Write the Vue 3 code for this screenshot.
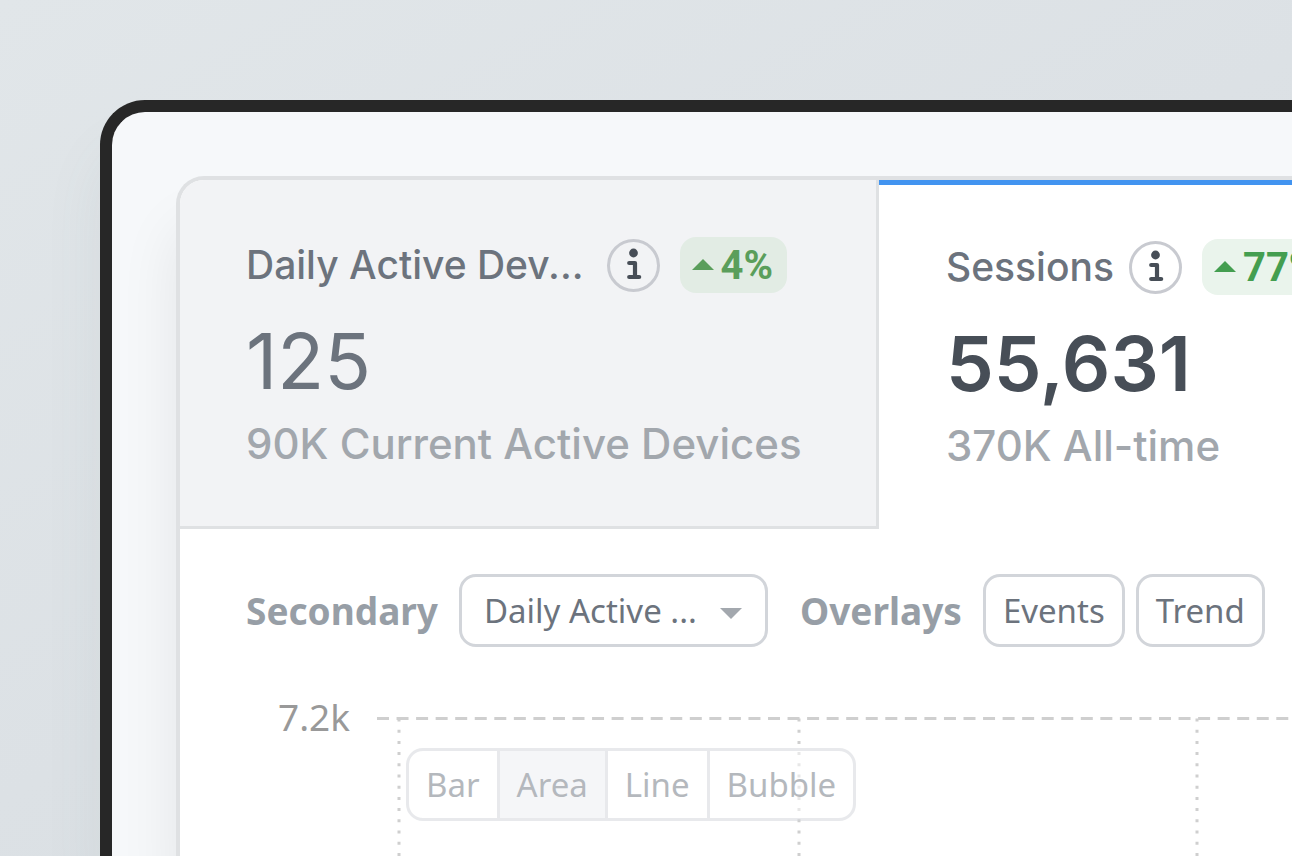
<script setup>
import { ref } from 'vue';

const stats = [
  {
    id: 'devices',
    title: 'Daily Active Dev...',
    change: '4%',
    value: '125',
    note: '90K Current Active Devices'
  },
  {
    id: 'sessions',
    title: 'Sessions',
    change: '77%',
    value: '55,631',
    note: '370K All-time'
  }
];
const activeStat = ref('sessions');

const secondary = ref('Daily Active ...');
const overlays = ['Events', 'Trend'];
const activeOverlays = ref([]);

const chartTypes = ['Bar', 'Area', 'Line', 'Bubble'];
const chartType = ref('Area');

const gridLines = [22, 422, 820, 1219];

function toggleOverlay(name) {
  const list = activeOverlays.value;
  activeOverlays.value = list.includes(name) ? list.filter(o => o !== name) : [...list, name];
}
</script>

<template>
  <div class="stage">
    <main class="device">
      <div class="card">
        <div class="stats">
          <section
            v-for="stat in stats"
            :key="stat.id"
            class="stat"
            :class="{ active: stat.id === activeStat }"
          >
            <div class="stat-head">
              <button type="button" class="stat-title" @click="activeStat = stat.id">{{ stat.title }}</button>
              <button type="button" class="info-button" :aria-label="'About ' + stat.title">
                <svg viewBox="0 0 53 53" aria-hidden="true">
                  <circle cx="26.5" cy="14" r="4.4" fill="#474e57" />
                  <path
                    d="M22.2 24H28v14M22.2 38h10"
                    fill="none"
                    stroke="#474e57"
                    stroke-width="4.2"
                    stroke-linecap="round"
                    stroke-linejoin="round"
                  />
                </svg>
              </button>
              <span class="badge">
                <svg class="badge-arrow" viewBox="0 0 22 12" aria-hidden="true">
                  <path d="M0 11L11 0l11 11z" fill="currentColor" />
                </svg>
                {{ stat.change }}
              </span>
            </div>
            <div class="stat-value">{{ stat.value }}</div>
            <div class="stat-note">{{ stat.note }}</div>
          </section>
        </div>

        <div class="filters">
          <div class="filter">
            <label for="secondary" class="filter-label">Secondary</label>
            <div class="select-wrap">
              <select id="secondary" v-model="secondary">
                <option>Daily Active ...</option>
                <option>Sessions</option>
              </select>
              <svg class="select-arrow" viewBox="0 0 22 11" aria-hidden="true">
                <path d="M0 0h22L11 11z" fill="#a3a8ae" />
              </svg>
            </div>
          </div>
          <div class="filter" role="group" aria-labelledby="overlays-label">
            <span id="overlays-label" class="filter-label">Overlays</span>
            <div class="overlay-buttons">
              <button
                v-for="name in overlays"
                :key="name"
                type="button"
                class="overlay-button"
                :aria-pressed="activeOverlays.includes(name)"
                @click="toggleOverlay(name)"
              >{{ name }}</button>
            </div>
          </div>
        </div>

        <div class="chart">
          <span class="axis-label">7.2k</span>
          <div class="plot">
            <svg class="grid-lines" aria-hidden="true">
              <line x1="0" y1="1.5" x2="100%" y2="1.5" stroke-dasharray="12 7.55" />
              <line
                v-for="x in gridLines"
                :key="x"
                :x1="x"
                y1="1.5"
                :x2="x"
                y2="100%"
                stroke-dasharray="3 8.2"
              />
            </svg>
            <div class="chart-types" role="group" aria-label="Chart type">
              <button
                v-for="type in chartTypes"
                :key="type"
                type="button"
                :class="{ selected: type === chartType }"
                :aria-pressed="type === chartType"
                @click="chartType = type"
              >{{ type }}</button>
            </div>
          </div>
        </div>
      </div>
    </main>
  </div>
</template>

<style>
body { margin: 0; }
</style>

<style scoped>
.stage {
  display: flex;
  box-sizing: border-box;
  height: 100vh;
  padding: 100px 0 0 100px;
  overflow: hidden;
  background: linear-gradient(150deg, #e1e6e9 0%, #dce1e5 50%, #d7dde1 100%);
  font-family: "Noto Sans", sans-serif;
}
button, select { font-family: inherit; margin: 0; cursor: pointer; }
.device {
  display: flex;
  flex: 1;
  min-width: 0;
  box-sizing: border-box;
  padding: 64px 0 0 64px;
  border: solid #272727;
  border-width: 12px 0 0 12px;
  border-top-left-radius: 45px;
  background: #f6f8fa;
  box-shadow: 0 50px 60px rgba(90, 110, 120, 0.08);
}
.card {
  display: flex;
  flex-direction: column;
  flex: 1;
  min-width: 0;
  border: solid #dfe1e3;
  border-width: 4px 0 0 4px;
  border-top-left-radius: 28px;
  background: #fff;
  box-shadow: 0 50px 60px rgba(0, 0, 0, 0.08);
}

/* stat tabs */
.stats { display: flex; }
.stat {
  flex: none;
  box-sizing: border-box;
  width: 699px;
  padding: 57px 64px 55px 66px;
  border: solid #dfe1e3;
  border-width: 0 3px 3px 0;
  background: #f2f3f5;
  font-family: Inter, sans-serif;
}
.stat:first-child { border-top-left-radius: 24px; }
.stat.active {
  padding-top: 54px;
  padding-left: 67px;
  border-color: #4294f0;
  border-width: 5px 0 0;
  background: #fff;
}
.stat-head { display: flex; align-items: center; height: 56px; white-space: nowrap; }
.stat-title {
  padding: 0;
  border: 0;
  background: none;
  font-size: 39px;
  font-weight: 500;
  line-height: 56px;
  color: #6c737d;
}
.info-button {
  box-sizing: border-box;
  width: 53px;
  height: 53px;
  margin-left: 23px;
  padding: 0;
  border: 3px solid #c8cad0;
  border-radius: 50%;
  background: none;
}
.active .info-button { margin-left: 15px; }
.info-button svg { display: block; width: 53px; height: 53px; margin: -3px; }
.badge {
  display: flex;
  align-items: center;
  gap: 7px;
  height: 56px;
  margin-left: 20px;
  padding: 0 14px 0 12px;
  border-radius: 16px;
  background: #e2ece4;
  font-family: Roboto, sans-serif;
  font-size: 40px;
  font-weight: 700;
  color: #5a9e5b;
}
.active .badge { background: #eaf4ec; color: #449e50; }
.badge-arrow { width: 22px; height: 12px; }
.stat-value { margin-top: 28px; font-size: 77px; line-height: 80px; color: #6c737d; }
.active .stat-value { font-size: 76px; font-weight: 600; color: #474e57; }
.stat-note {
  margin-top: 16px;
  font-size: 42px;
  font-weight: 500;
  line-height: 54px;
  white-space: nowrap;
  color: #a2a7ad;
}

/* filters */
.filters { display: flex; gap: 32px; padding: 45px 0 0 66px; }
.filter { display: flex; align-items: center; gap: 21px; }
.filter-label { font-size: 37px; font-weight: 700; color: #979ea6; }
.select-wrap { display: grid; align-items: center; }
.select-wrap > * { grid-area: 1 / 1; }
.select-arrow {
  justify-self: end;
  width: 22px;
  height: 11px;
  margin: 5px 26px 0 0;
  pointer-events: none;
}
select, .overlay-button {
  box-sizing: border-box;
  height: 73px;
  border: 3px solid #d2d5da;
  border-radius: 17px;
  background: #fff;
  font-size: 33px;
  color: #6c737d;
}
select { appearance: none; width: 309px; padding: 0 60px 0 22px; }
.overlay-buttons { display: flex; gap: 11px; }
.overlay-button { padding: 0 17px; }

/* chart */
.chart { display: flex; flex: 1; padding: 70px 0 0 65px; }
.axis-label {
  width: 105px;
  margin-top: -25px;
  text-align: right;
  font-size: 37px;
  line-height: 50px;
  color: #999;
}
.plot { position: relative; flex: 1; min-width: 0; margin-left: 27px; }
.grid-lines { position: absolute; inset: 0; width: 100%; height: 100%; }
.grid-lines line { stroke: #cfcfcf; stroke-width: 3; }
.chart-types {
  position: absolute;
  top: 31px;
  left: 29px;
  display: flex;
  box-sizing: border-box;
  height: 73px;
  border: 3px solid #d2d5da;
  border-radius: 17px;
  overflow: hidden;
  background: #fff;
  opacity: 0.5;
}
.chart-types button {
  padding: 0 17px;
  border: 0;
  background: none;
  font-size: 33px;
  color: #6c737d;
}
.chart-types button + button { border-left: 3px solid #d2d5da; }
.chart-types .selected { background: #edeff3; }
</style>
